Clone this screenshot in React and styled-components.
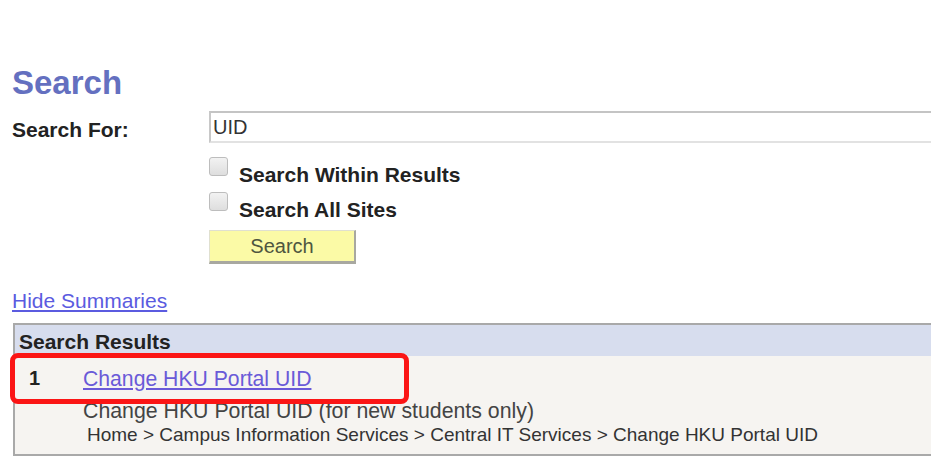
import React from "react";
import styled, { createGlobalStyle } from "styled-components";

const GlobalStyle = createGlobalStyle`
  html, body {
    margin: 0;
    padding: 0;
    background: #ffffff;
    overflow: hidden;
  }
  body {
    font-family: "Liberation Sans", Arial, sans-serif;
  }
`;

const Page = styled.div`
  width: 931px;
  height: 459px;
  padding: 64px 0 0 12px;
  box-sizing: border-box;
`;

const Title = styled.h1`
  margin: 0;
  font-size: 33px;
  line-height: 38px;
  font-weight: bold;
  color: #6470c0;
`;

const Form = styled.div`
  display: grid;
  grid-template-columns: 197px 1fr;
  margin-top: 9px;
`;

const Label = styled.label`
  font-size: 21px;
  font-weight: bold;
  color: #222;
  line-height: 32px;
  padding-top: 3px;
`;

const TextInput = styled.div`
  width: 760px;
  height: 32px;
  box-sizing: border-box;
  border-top: 2px solid #c4c4c4;
  border-left: 2px solid #c8c8c8;
  border-bottom: 2px solid #e2e2e2;
  padding-left: 2px;
  font-size: 20px;
  line-height: 28px;
  color: #333;
`;

const Options = styled.div`
  grid-column: 2;
  display: flex;
  flex-direction: column;
  padding-top: 14px;
`;

const CheckRow = styled.div`
  display: flex;
  align-items: flex-start;
  gap: 11px;
  height: 35px;
`;

const Box = styled.span`
  width: 19px;
  height: 19px;
  box-sizing: border-box;
  border: 1.5px solid #bdbdbd;
  border-radius: 3px;
  background: linear-gradient(#f2f2f2, #dedede);
  margin-top: ${(p) => p.$top}px;
`;

const CheckText = styled.span`
  font-size: 21px;
  font-weight: bold;
  color: #222;
  line-height: 30px;
`;

const Button = styled.div`
  width: 147px;
  height: 34px;
  box-sizing: border-box;
  background: #fbfaa6;
  border-top: 1px solid #e0e0d0;
  border-left: 1px solid #e0e0d0;
  border-right: 2px solid #a8a8a0;
  border-bottom: 3px solid #a8a8a0;
  text-align: center;
  font-size: 20px;
  line-height: 31px;
  color: #4f5640;
`;

const Link = styled.a`
  color: ${(p) => p.$color || "#5b5be0"};
  text-decoration: underline;
  font-size: ${(p) => p.$size || 21}px;
  cursor: pointer;
`;

const HideRow = styled.div`
  margin-top: 25px;
  line-height: 24px;
`;

const Results = styled.div`
  position: relative;
  margin-top: 8px;
  margin-left: 1px;
  width: 940px;
  border: 2px solid #a9a9a9;
  border-right: none;
  background: #f6f4f1;
`;

const Header = styled.div`
  background: #d7ddee;
  height: 31px;
  padding-left: 4px;
  font-size: 21px;
  font-weight: bold;
  color: #222;
  line-height: 34px;
`;

const ResultRow = styled.div`
  display: grid;
  grid-template-columns: 54px 1fr;
  padding: 11px 0 0 14px;
  line-height: 23px;
`;

const Num = styled.span`
  font-size: 20px;
  font-weight: bold;
  color: #222;
`;

const Summary = styled.div`
  padding: 10px 0 0 68px;
  font-size: 21.3px;
  color: #444;
  line-height: 23px;
`;

const Crumbs = styled.div`
  padding: 0 0 8px 72px;
  font-size: 19px;
  color: #333;
  line-height: 23px;
`;

const Highlight = styled.div`
  position: absolute;
  left: -5px;
  top: 28px;
  width: 399px;
  height: 51px;
  box-sizing: border-box;
  border: 5px solid #fb1515;
  border-radius: 8px;
`;

export default function App() {
  return (
    <Page>
      <GlobalStyle />
      <Title>Search</Title>
      <Form>
        <Label>Search For:</Label>
        <TextInput>UID</TextInput>
        <Options>
          <CheckRow>
            <Box $top={-3} />
            <CheckText>Search Within Results</CheckText>
          </CheckRow>
          <CheckRow>
            <Box $top={-3} />
            <CheckText>Search All Sites</CheckText>
          </CheckRow>
          <Button>Search</Button>
        </Options>
      </Form>
      <HideRow>
        <Link>Hide Summaries</Link>
      </HideRow>
      <Results>
        <Header>Search Results</Header>
        <ResultRow>
          <Num>1</Num>
          <Link $color="#6a5ad8" $size={21.2}>Change HKU Portal UID</Link>
        </ResultRow>
        <Summary>Change HKU Portal UID (for new students only)</Summary>
        <Crumbs>
          Home &gt; Campus Information Services &gt; Central IT Services &gt; Change HKU Portal UID
        </Crumbs>
        <Highlight />
      </Results>
    </Page>
  );
}
